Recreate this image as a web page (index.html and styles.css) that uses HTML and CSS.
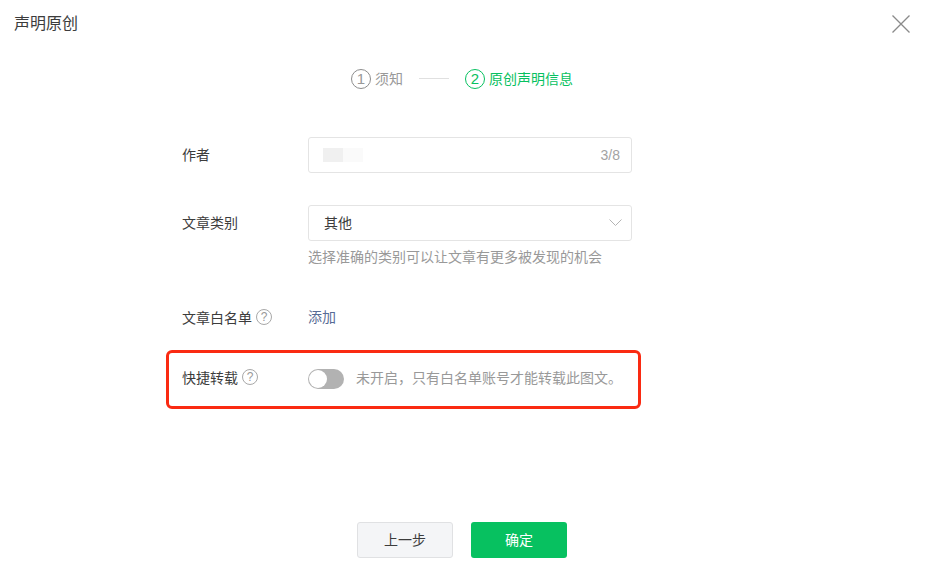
FILE: index.html
```html
<!DOCTYPE html>
<html lang="zh-CN">
<head>
    <meta charset="UTF-8">
    <meta name="viewport" content="width=device-width, initial-scale=1.0">
    <title>声明原创</title>
    <link rel="stylesheet" href="styles.css">
</head>
<body>
    <div class="dialog">
        <div class="dialog-header">
            <h1 class="dialog-title">声明原创</h1>
            <svg class="close-icon" width="18" height="18" viewBox="0 0 18 18">
                <path d="M0.5 0.5L17.5 17.5M17.5 0.5L0.5 17.5" stroke="#8a8a8a" stroke-width="1.3" fill="none"/>
            </svg>
        </div>

        <div class="steps">
            <div class="step">
                <span class="step-num">1</span>
                <span class="step-text">须知</span>
            </div>
            <div class="step-line"></div>
            <div class="step step-active">
                <span class="step-num">2</span>
                <span class="step-text">原创声明信息</span>
            </div>
        </div>

        <div class="form">
            <div class="form-row row-author">
                <label class="form-label">作者</label>
                <div class="form-control">
                    <div class="input-box">
                        <div class="blur-name"><span class="blur-a"></span><span class="blur-b"></span></div>
                        <span class="counter">3/8</span>
                    </div>
                </div>
            </div>

            <div class="form-row row-type">
                <label class="form-label">文章类别</label>
                <div class="form-control">
                    <div class="input-box select-box">
                        <span class="select-text">其他</span>
                        <svg width="13" height="8" viewBox="0 0 13 8">
                            <path d="M0.5 0.5L6.5 6.5L12.5 0.5" stroke="#b4b4b4" stroke-width="1" fill="none"/>
                        </svg>
                    </div>
                    <p class="form-hint">选择准确的类别可以让文章有更多被发现的机会</p>
                </div>
            </div>

            <div class="form-row row-white">
                <label class="form-label">文章白名单<span class="help">?</span></label>
                <div class="form-control"><a class="add-link">添加</a></div>
            </div>

            <div class="form-row row-quick">
                <label class="form-label">快捷转载<span class="help">?</span></label>
                <div class="form-control switch-wrap">
                    <span class="switch"><span class="switch-knob"></span></span>
                    <span class="switch-text">未开启，只有白名单账号才能转载此图文。</span>
                </div>
                <div class="red-mark"></div>
            </div>
        </div>

        <div class="dialog-footer">
            <button class="btn btn-default">上一步</button>
            <button class="btn btn-primary">确定</button>
        </div>
    </div>
</body>
</html>
```

FILE: styles.css
```css
/* Global Styles */
body {
    margin: 0;
    padding: 0;
    background-color: #fff;
    color: #3c3c3c;
    font-family: "Liberation Sans", "Noto Sans CJK SC", sans-serif;
    font-size: 14px;
    overflow: hidden;
}

.dialog {
    width: 926px;
    height: 579px;
    display: flex;
    flex-direction: column;
    box-sizing: border-box;
}

.dialog-header {
    display: flex;
    justify-content: space-between;
    align-items: center;
    height: 48px;
    padding: 0 16px 0 14px;
}

.dialog-title {
    margin: 0;
    font-size: 16px;
    font-weight: 400;
    line-height: 24px;
}

.steps {
    display: flex;
    justify-content: center;
    align-items: center;
    gap: 16px;
    height: 20px;
    margin-top: 21px;
    padding-right: 2px;
    color: #999;
}

.step {
    display: flex;
    align-items: center;
    gap: 4px;
}

.step-text {
    padding-bottom: 2px;
}

.step-num {
    width: 18px;
    height: 18px;
    border: 1px solid #8d8d8d;
    border-radius: 50%;
    text-align: center;
    line-height: 17px;
    font-size: 15px;
}

.step-active {
    color: #07c160;
}

.step-active .step-num {
    border-color: #07c160;
}

.step-line {
    width: 30px;
    height: 1px;
    margin-top: -2px;
    background-color: #e0e0e0;
}

.form {
    width: 458px;
    margin-left: 182px;
}

.form-row {
    position: relative;
    display: flex;
}

.form-label {
    display: flex;
    align-items: center;
    width: 126px;
    height: 36px;
    padding-bottom: 2px;
    box-sizing: border-box;
    flex-shrink: 0;
}

.form-control {
    width: 324px;
}

.row-author {
    margin-top: 48px;
}

.row-type {
    margin-top: 32px;
}

.row-white {
    margin-top: 33px;
}

.row-quick {
    margin-top: 25px;
}

.row-quick .form-label {
    padding-bottom: 4px;
}

.input-box {
    display: flex;
    justify-content: space-between;
    align-items: center;
    height: 36px;
    padding: 0 11px 0 15px;
    border: 1px solid #e4e4e4;
    border-radius: 3px;
    box-sizing: border-box;
}

.select-box {
    padding-right: 9px;
}

.select-text {
    padding-bottom: 2px;
}

.blur-name {
    display: flex;
    margin-left: -1px;
}

.blur-a {
    width: 20px;
    height: 14px;
    background-color: #f0f0f0;
}

.blur-b {
    width: 20px;
    height: 14px;
    background-color: #fafafa;
}

.counter {
    color: #a3a3a3;
}

.form-hint {
    margin: 6px 0 0;
    line-height: 20px;
    color: #999;
}

.help {
    display: inline-block;
    width: 14px;
    height: 14px;
    margin-left: 4px;
    border: 1px solid #a8a8a8;
    border-radius: 50%;
    text-align: center;
    line-height: 14px;
    font-size: 12px;
    color: #999;
}

.add-link {
    display: block;
    padding-bottom: 2px;
    line-height: 34px;
    color: #576b95;
}

.switch-wrap {
    display: flex;
    align-items: center;
    height: 36px;
}

.switch {
    display: flex;
    align-items: center;
    width: 36px;
    height: 20px;
    border-radius: 10px;
    background-color: #b2b2b2;
    box-sizing: border-box;
}

.switch-knob {
    width: 18px;
    height: 18px;
    margin-left: 1px;
    border-radius: 50%;
    background-color: #fff;
}

.switch-text {
    margin-left: 12px;
    padding-bottom: 4px;
    color: #999;
    white-space: nowrap;
}

/* annotation drawn over the screenshot */
.red-mark {
    position: absolute;
    top: -11px;
    left: -16px;
    width: 475px;
    height: 59px;
    border: 3px solid #fa2a12;
    border-radius: 6px;
    box-sizing: border-box;
}

.dialog-footer {
    display: flex;
    justify-content: center;
    gap: 18px;
    margin-top: auto;
    margin-bottom: 21px;
    padding-right: 2px;
}

.btn {
    width: 96px;
    height: 36px;
    padding: 0 0 2px;
    border-radius: 3px;
    font-family: inherit;
    font-size: 14px;
    box-sizing: border-box;
}

.btn-default {
    background-color: #f4f5f7;
    border: 1px solid #e0e1e3;
    color: #3c3c3c;
}

.btn-primary {
    background-color: #07c160;
    border: none;
    color: #fff;
}
```
